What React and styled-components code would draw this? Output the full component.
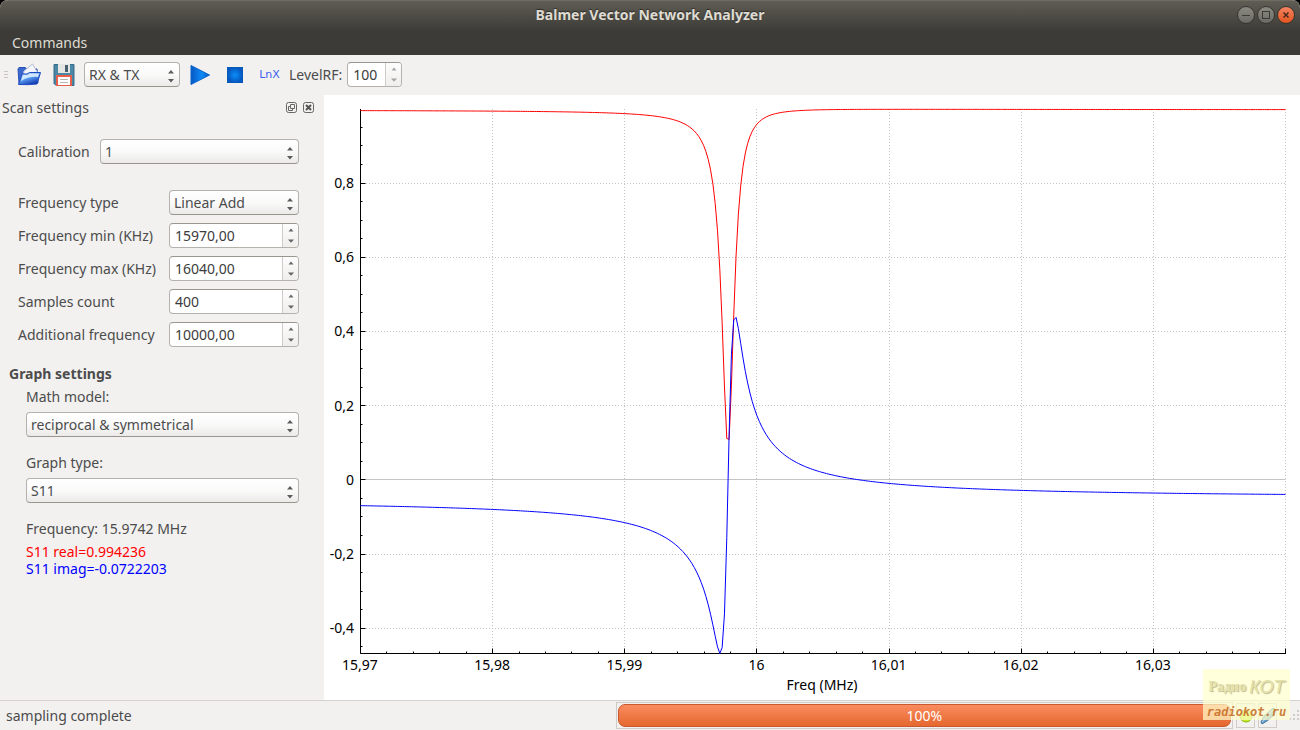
import React, { useState } from "react";
import styled, { createGlobalStyle } from "styled-components";

const GlobalStyle = createGlobalStyle`
  * {
    box-sizing: border-box;
  }

  body {
    margin: 0;
    background-color: #000;
    color: #4c4c4c;
    font-family: "Noto Sans", "Open Sans", sans-serif;
    font-size: 14px;
    line-height: 20px;
  }

  button, input, select {
    font: inherit;
    color: inherit;
  }
`;

const Window = styled.div`
  position: relative;
  display: flex;
  flex-direction: column;
  min-height: 100vh;
  background-color: #f2f1f0;
  border-radius: 8px 8px 0 0;
  overflow: hidden;
`;

const Header = styled.header`
  background: linear-gradient(#5f5d54, #3c3b37 30px);
  color: #dfdbd2;
  border-top: 1px solid #6d6b62;
`;

const TitleBar = styled.div`
  display: grid;
  grid-template-columns: 1fr auto 1fr;
  align-items: center;
  height: 29px;
  padding: 0 5px 1px;

  h1 {
    grid-column: 2;
    margin: 0;
    font-size: 14px;
    line-height: 20px;
    font-weight: 700;
    text-shadow: 0 -1px 1px #2b2a27;
  }
`;

const WindowButtons = styled.div`
  display: flex;
  justify-content: flex-end;
  gap: 2px;
`;

const WindowButton = styled.button`
  display: flex;
  width: 18px;
  height: 18px;
  padding: 0;
  border: 1px solid #35342f;
  border-radius: 50%;
  background: ${({ $close }) =>
    $close
      ? "linear-gradient(#f58461, #e4541f)"
      : "linear-gradient(#8b8a82, #6b6a64)"};
`;

const MenuBar = styled.nav`
  display: flex;
  height: 25px;
  padding: 2px 5px;

  button {
    padding: 0 7px;
    border: none;
    background: none;
  }
`;

const ToolBar = styled.div`
  display: flex;
  align-items: center;
  height: 40px;
  padding: 0 0 1px 4px;
`;

const Handle = styled.svg`
  width: 5px;
  height: 12px;
  margin-right: 2px;
`;

const ToolButton = styled.button`
  display: flex;
  align-items: center;
  justify-content: center;
  width: 35px;
  height: 36px;
  padding: 0;
  border: none;
  background: none;
  color: #3c5ff0;
  font-family: "DejaVu Sans", sans-serif;
  font-size: 11px;
`;

const ModeField = styled.div`
  padding: 0 2px 0 3px;
`;

const LevelField = styled.div`
  display: flex;
  align-items: center;
  gap: 5px;
  margin-left: 2px;
`;

const SelectBox = styled.div`
  position: relative;
  width: ${({ $width }) => $width || "100%"};

  select {
    display: block;
    appearance: none;
    width: 100%;
    height: 25px;
    padding: 0 20px 0 4px;
    border: 1px solid #b5b2ad;
    border-bottom-color: #99958f;
    border-radius: 4px;
    background: linear-gradient(#fff, #fafafa 50%, #ebeae8);
    line-height: 23px;
    outline: none;
  }

  svg {
    position: absolute;
    right: 5px;
    top: 7px;
    pointer-events: none;
  }
`;

const SpinField = styled.div`
  display: flex;
  width: ${({ $width }) => $width || "100%"};
  height: 25px;
  border: 1px solid #b5b2ad;
  border-top-color: #99958f;
  border-radius: 4px;
  background-color: #fff;
  overflow: hidden;

  input {
    flex: 1;
    min-width: 0;
    padding: 0 5px;
    border: none;
    background: none;
    color: #3c3c3c;
    outline: none;
  }
`;

const SpinButtons = styled.div`
  display: flex;
  flex-direction: column;
  width: 16px;
  border-left: 1px solid #cfccc8;
  background: linear-gradient(#fdfdfd, #efeeec);

  button {
    display: flex;
    flex: 1;
    align-items: center;
    justify-content: center;
    padding: 0;
    border: none;
    background: none;
  }
`;

const Workspace = styled.main`
  display: flex;
  flex: 1;
`;

const Dock = styled.aside`
  flex: 0 0 auto;
  width: 324px;
`;

const DockTitle = styled.div`
  display: flex;
  align-items: center;
  gap: 5px;
  height: 25px;
  padding: 0 9px 0 2px;

  h2 {
    flex: 1;
    margin: 0;
    font-size: 14px;
    font-weight: 400;
  }

  button {
    display: flex;
    padding: 0;
    border: none;
    background: none;
  }
`;

const Calibration = styled.div`
  display: grid;
  grid-template-columns: 74px 1fr;
  gap: 8px;
  align-items: center;
  padding: 19px 25px 0 18px;
`;

const SettingsGrid = styled.div`
  display: grid;
  grid-template-columns: 1fr 130px;
  gap: 8px;
  align-items: center;
  padding: 26px 25px 0 18px;

  label {
    white-space: nowrap;
  }
`;

const GraphTitle = styled.h3`
  margin: 17px 0 0 9px;
  font-size: 14px;
  line-height: 20px;
  font-weight: 700;
`;

const GraphField = styled.div`
  display: flex;
  flex-direction: column;
  gap: 5px;
  padding: 3px 25px 13px 26px;
`;

const Readout = styled.div`
  padding: 3px 0 0 26px;

  p {
    margin: 0 0 4px;
  }
`;

const Value = styled.div`
  color: ${({ $color }) => $color};
  line-height: 17px;
`;

const ChartPanel = styled.section`
  flex: 1;
  min-width: 0;
  background-color: #fff;

  svg {
    display: block;
    width: 100%;
    height: auto;
  }
`;

const StatusBar = styled.footer`
  display: flex;
  align-items: center;
  height: 30px;
  border-top: 1px solid #d5d2ce;
`;

const StatusText = styled.div`
  flex: 1 1 0;
  padding-left: 6px;
`;

const ProgressFrame = styled.div`
  flex: 1 1 8px;
  padding: 1px;
  border: 1px solid #cfccc8;
`;

const ProgressFill = styled.div`
  height: 23px;
  border: 1px solid #c8582f;
  border-radius: 7px;
  background: linear-gradient(#fa8b5f, #e5682f);
  color: #fff;
  font-size: 14px;
  line-height: 22px;
  text-align: center;
`;

const StatusIcons = styled.div`
  display: flex;
  align-items: center;
  gap: 3px;
  padding-left: 3px;

  > svg {
    margin-left: 8px;
  }
`;

const StatusIcon = styled.span`
  display: flex;
  align-items: center;
  justify-content: center;
  width: 19px;
  height: 25px;
  border: 1px solid #cfccc8;
`;

const Watermark = styled.div`
  position: absolute;
  right: 10px;
  bottom: 10px;
  width: 87px;
  height: 51px;
  background-color: rgba(255, 255, 204, 0.7);
  text-align: center;
  white-space: nowrap;
  pointer-events: none;

  p {
    display: flex;
    align-items: center;
    justify-content: center;
    gap: 3px;
    margin: 0;
    height: 36px;
    color: #e4e2aa;
    font-family: "Liberation Serif", serif;
    font-size: 14px;
    font-weight: 700;
    text-shadow: 1px 1px 1px #b9b791;
  }

  em {
    font-family: "Liberation Sans", sans-serif;
    font-size: 18px;
    font-weight: 400;
  }

  small {
    display: block;
    color: rgba(196, 104, 30, 0.85);
    font-family: "DejaVu Sans Mono", monospace;
    font-size: 12px;
    font-style: italic;
    font-weight: 700;
    line-height: 14px;
  }
`;

const Select = ({ id, options, width, label }) => (
  <SelectBox $width={width}>
    <select id={id} aria-label={label}>
      {options.map((option) => (
        <option key={option}>{option}</option>
      ))}
    </select>
    <svg width="8" height="14" fill="#5c5c5c">
      <path d="M1 4.500 L4 1 L7 4.500Z M1 10 L4 13.500 L7 10Z" />
    </svg>
  </SelectBox>
);

const Spin = ({ id, initial, decimals = 0, width, faded }) => {
  const [value, setValue] = useState(initial);

  function step(amount) {
    const next = parseFloat(value.replace(",", ".")) + amount;
    setValue(next.toFixed(decimals).replace(".", ","));
  }

  const color = faded ? "#a5a5a5" : "#666";

  return (
    <SpinField $width={width}>
      <input id={id} value={value} onChange={(e) => setValue(e.target.value)} />
      <SpinButtons>
        <button aria-label="Increase" onClick={() => step(1)}>
          <svg width="6" height="4" fill={color}>
            <path d="M0.500 3.500 L3 0.500 L5.500 3.500Z" />
          </svg>
        </button>
        <button aria-label="Decrease" onClick={() => step(-1)}>
          <svg width="6" height="4" fill={color}>
            <path d="M0 0.500 L3 3.800 L6 0.500Z" />
          </svg>
        </button>
      </SpinButtons>
    </SpinField>
  );
};

const OpenIcon = () => (
  <svg width="24" height="24" viewBox="0 0 24 24">
    <defs>
      <linearGradient id="folder" x1="0" y1="0" x2="0.6" y2="1">
        <stop offset="0" stopColor="#b9dcff" />
        <stop offset="0.5" stopColor="#5ea4f5" />
        <stop offset="1" stopColor="#1238ae" />
      </linearGradient>
    </defs>
    <path d="M1 6 L2 4.500 H8 L10 6 H20 L21 20 H2Z" fill="#3a68cf" stroke="#2650b6" />
    <path d="M7 8 L15.500 1 L22 12 L6 15Z" fill="#f4f6fc" stroke="#b4bdd2" />
    <path d="M5 11 H10 L12.500 9.500 H23.500 L20 21 Q12 22 1.500 21.500Z" fill="url(#folder)" stroke="#1d4ac0" />
    <path d="M6 12 H10.500 L13 10.500 H22 L21 14 Q12 13 4 18Z" fill="#e3f2ff" opacity="0.85" />
  </svg>
);

const SaveIcon = () => (
  <svg width="22" height="24" viewBox="0 0 22 24">
    <path d="M1 1.500 H21 V22.500 H3 L1 20.500Z" fill="#4b87a5" stroke="#376d8a" />
    <rect x="5" y="1" width="12" height="9" fill="#e5e5e3" />
    <rect x="12" y="2" width="3" height="7" fill="#46606d" />
    <rect x="3" y="12" width="16" height="11" fill="#e8604a" />
    <rect x="5" y="14" width="12" height="8" fill="#fff" />
    <path d="M7 16.500 H15 M7 19.500 H15" stroke="#b5b5b5" />
  </svg>
);

const PlayIcon = () => (
  <svg width="22" height="22" viewBox="0 0 22 22">
    <defs>
      <linearGradient id="play">
        <stop offset="0" stopColor="#0757c2" />
        <stop offset="0.6" stopColor="#0d8bf9" />
        <stop offset="1" stopColor="#0757c2" />
      </linearGradient>
    </defs>
    <path d="M2 1.500 L20.500 11 L2 20.500Z" fill="url(#play)" stroke="#0c63c9" />
  </svg>
);

const StopIcon = () => (
  <svg width="18" height="18" viewBox="0 0 18 18">
    <defs>
      <radialGradient id="stop">
        <stop offset="0" stopColor="#0b8dfb" />
        <stop offset="1" stopColor="#0558bd" />
      </radialGradient>
    </defs>
    <rect x="1.500" y="1.500" width="15" height="15" fill="url(#stop)" stroke="#075ab9" />
  </svg>
);

// plot area in svg units
const LEFT = 36.5;
const RIGHT = 961.5;
const TOP = 14;
const BOTTOM = 558.5;
const ZERO = 384.8;
const UNIT = 371;
const DECADE = 132.14;
const SAMPLES = 400;

// reflection of a single resonance: S11 = S0 - A * e^(j*theta) / (1 + jx)
function sample(px) {
  const x = (px - 404.3) / 7.4;
  const amp = 0.907 / (1 + x * x);
  return {
    real: 0.997 - amp * (1 - 0.084 * x),
    imag: -0.0515 + amp * (0.084 + x),
  };
}

function curve(part) {
  const points = [];
  for (let i = 0; i < SAMPLES; i++) {
    const px = LEFT + ((RIGHT - LEFT) * i) / (SAMPLES - 1);
    const py = ZERO - sample(px)[part] * UNIT;
    points.push(`${px.toFixed(2)},${py.toFixed(2)}`);
  }
  return points.join(" ");
}

const xLabels = ["15,97", "15,98", "15,99", "16", "16,01", "16,02", "16,03"];
const yLabels = [
  [0.8, "0,8"],
  [0.6, "0,6"],
  [0.4, "0,4"],
  [0.2, "0,2"],
  [0, "0"],
  [-0.2, "-0,2"],
  [-0.4, "-0,4"],
];
const snap = (n) => Math.floor(n) + 0.5;

const Chart = () => {
  const minorX = Array.from({ length: 36 }, (_, i) => snap(LEFT + (i * DECADE) / 5));
  const minorY = Array.from({ length: 29 }, (_, i) => snap(ZERO - (i - 9) * 0.05 * UNIT));

  return (
    <svg viewBox="0 0 976 605" role="img" aria-label="S11 by frequency">
      <g stroke="#c4c4c4" strokeDasharray="1 2">
        {xLabels.slice(1).map((label, i) => {
          const x = snap(LEFT + (i + 1) * DECADE);
          return <line key={label} x1={x} x2={x} y1={TOP} y2={BOTTOM} />;
        })}
        <line x1={RIGHT} x2={RIGHT} y1={TOP} y2={BOTTOM} />
        {yLabels
          .filter(([value]) => value !== 0)
          .map(([value]) => {
            const y = snap(ZERO - value * UNIT);
            return <line key={value} x1="36" x2={RIGHT} y1={y} y2={y} />;
          })}
      </g>
      <line x1={LEFT} x2={RIGHT} y1={snap(ZERO)} y2={snap(ZERO)} stroke="#c4c4c4" />

      <g stroke="#000">
        <path d={`M${LEFT} ${TOP} V${BOTTOM} H962`} fill="none" />
        {minorX.map((x, i) => (
          <line key={x} x1={x} x2={x} y1={BOTTOM} y2={BOTTOM - (i % 5 ? 2 : 5)} />
        ))}
        {minorY.map((y, i) => (
          <line key={y} x1={LEFT} x2={LEFT + ((i - 9) % 4 ? 2 : 5)} y1={y} y2={y} />
        ))}
      </g>

      <g fill="none" strokeWidth="1">
        <polyline points={curve("real")} stroke="#f00" />
        <polyline points={curve("imag")} stroke="#00f" />
      </g>

      <g fill="#000" fontSize="14">
        {xLabels.map((label, i) => (
          <text key={label} x={36 + i * DECADE} y="575" textAnchor="middle">
            {label}
          </text>
        ))}
        {yLabels.map(([value, label]) => (
          <text key={label} x="30" y={ZERO - value * UNIT + 5} textAnchor="end">
            {label}
          </text>
        ))}
        <text x="498" y="595" textAnchor="middle">
          Freq (MHz)
        </text>
      </g>
    </svg>
  );
};

const spins = [
  ["min", "Frequency min (KHz)", "15970,00", 2],
  ["max", "Frequency max (KHz)", "16040,00", 2],
  ["count", "Samples count", "400", 0],
  ["additional", "Additional frequency", "10000,00", 2],
];

const App = () => {
  return (
    <>
      <GlobalStyle />
      <Window>
        <Header>
          <TitleBar>
            <h1>Balmer Vector Network Analyzer</h1>
            <WindowButtons>
              <WindowButton aria-label="Minimize">
                <svg width="16" height="16" stroke="#3c3b37">
                  <path d="M4 8.500 H12" />
                </svg>
              </WindowButton>
              <WindowButton aria-label="Maximize">
                <svg width="16" height="16" stroke="#3c3b37" fill="none">
                  <rect x="4.500" y="4.500" width="7" height="7" />
                </svg>
              </WindowButton>
              <WindowButton $close aria-label="Close">
                <svg width="16" height="16" stroke="#4a2a1c" strokeWidth="1.500">
                  <path d="M5.500 5.500 L10.500 10.500 M10.500 5.500 L5.500 10.500" />
                </svg>
              </WindowButton>
            </WindowButtons>
          </TitleBar>
          <MenuBar>
            <button>Commands</button>
          </MenuBar>
        </Header>

        <ToolBar>
          <Handle stroke="#c9c6c2">
            <path d="M0 2.500 H4 M0 5.500 H4 M0 8.500 H4" />
          </Handle>
          <ToolButton aria-label="Open">
            <OpenIcon />
          </ToolButton>
          <ToolButton aria-label="Save">
            <SaveIcon />
          </ToolButton>
          <ModeField>
            <Select label="Mode" width="96px" options={["RX & TX"]} />
          </ModeField>
          <ToolButton aria-label="Start">
            <PlayIcon />
          </ToolButton>
          <ToolButton aria-label="Stop">
            <StopIcon />
          </ToolButton>
          <ToolButton>LnX</ToolButton>
          <LevelField>
            <label htmlFor="level">LevelRF:</label>
            <Spin id="level" initial="100" width="55px" faded />
          </LevelField>
        </ToolBar>

        <Workspace>
          <Dock>
            <DockTitle>
              <h2>Scan settings</h2>
              <button aria-label="Float">
                <svg width="12" height="12" stroke="#666" fill="none">
                  <rect x="0.500" y="0.500" width="10" height="10" rx="2" />
                  <path d="M4.500 2.500 H8.500 V6.500 H4.500Z M4.500 4.500 H2.500 V8.500 H6.500 V6.500" />
                </svg>
              </button>
              <button aria-label="Close dock">
                <svg width="12" height="12" stroke="#666" fill="none">
                  <rect x="0.500" y="0.500" width="10" height="10" rx="2" />
                  <path d="M3 3 L8 8 M8 3 L3 8" stroke="#555" strokeWidth="2" />
                </svg>
              </button>
            </DockTitle>
            <Calibration>
              <label htmlFor="calibration">Calibration</label>
              <Select id="calibration" options={["1"]} />
            </Calibration>
            <SettingsGrid>
              <label htmlFor="type">Frequency type</label>
              <Select id="type" options={["Linear Add"]} />
              {spins.map(([id, label, initial, decimals]) => (
                <React.Fragment key={id}>
                  <label htmlFor={id}>{label}</label>
                  <Spin id={id} initial={initial} decimals={decimals} />
                </React.Fragment>
              ))}
            </SettingsGrid>
            <GraphTitle>Graph settings</GraphTitle>
            <GraphField>
              <label htmlFor="model">Math model:</label>
              <Select id="model" options={["reciprocal & symmetrical"]} />
            </GraphField>
            <GraphField>
              <label htmlFor="graph">Graph type:</label>
              <Select id="graph" options={["S11"]} />
            </GraphField>
            <Readout>
              <p>Frequency: 15.9742 MHz</p>
              <Value $color="#f00">S11 real=0.994236</Value>
              <Value $color="#00f">S11 imag=-0.0722203</Value>
            </Readout>
          </Dock>
          <ChartPanel>
            <Chart />
          </ChartPanel>
        </Workspace>

        <StatusBar>
          <StatusText>sampling complete</StatusText>
          <ProgressFrame>
            <ProgressFill
              role="progressbar"
              aria-valuenow={100}
              style={{ width: "100%" }}
            >
              100%
            </ProgressFill>
          </ProgressFrame>
          <StatusIcons>
            <StatusIcon>
              <svg width="14" height="14">
                <circle cx="7" cy="7" r="6" fill="#c6ee20" stroke="#8db013" />
              </svg>
            </StatusIcon>
            <StatusIcon>
              <svg width="17" height="18">
                <path d="M2 15 L5 9 L14 1 L16 2 L14 9 L8 14 L3 17Z" fill="#6d9fc4" stroke="#477ba3" />
                <path d="M3 15 L14 3" stroke="#b7d6e9" />
              </svg>
            </StatusIcon>
            <svg width="12" height="14" fill="#cfccc8">
              <path d="M9 1h2v2h-2z M5 5h2v2h-2z M9 5h2v2h-2z M1 9h2v2h-2z M5 9h2v2h-2z M9 9h2v2h-2z" />
            </svg>
          </StatusIcons>
        </StatusBar>

        <Watermark>
          <p>
            Радио <em>КОТ</em>
          </p>
          <small>radiokot.ru</small>
        </Watermark>
      </Window>
    </>
  );
};

export default App;
